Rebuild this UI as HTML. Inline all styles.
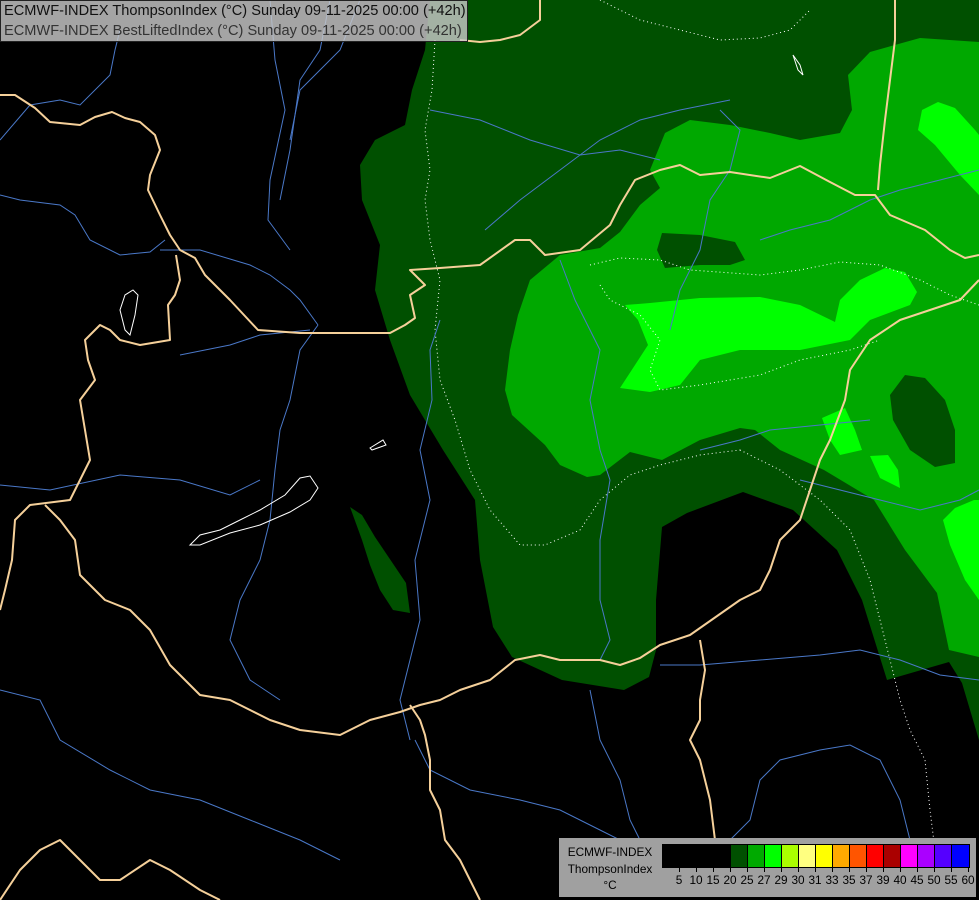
<!DOCTYPE html>
<html><head><meta charset="utf-8"><style>
html,body{margin:0;padding:0;background:#000;width:979px;height:900px;overflow:hidden}
svg{position:absolute;left:0;top:0}
.hdr{position:absolute;left:0;top:0;width:468px;height:42px;background:rgba(200,200,200,0.82);border:1px solid #222;box-sizing:border-box;font-family:"Liberation Sans",sans-serif;font-size:14.6px;line-height:19.5px;padding:1px 0 0 3px;color:#111;white-space:nowrap}
.hdr div:nth-child(2){color:#333}
.leg{position:absolute;left:559px;top:838px;width:417px;height:59px;background:#a0a0a0;font-family:"Liberation Sans",sans-serif;font-size:11.8px;color:#000}
.leg .t{position:absolute;left:0;width:102px;text-align:center}
.bar{position:absolute;left:103px;top:6px;height:22px;border:1px solid #000;display:flex}
.bar span{width:17px;height:22px;border-right:1px solid #000;box-sizing:border-box;display:block}
.bar span:last-child{border-right:none}
.nums{position:absolute;top:35px;left:0;width:417px;height:14px}
.nums b{position:absolute;font-weight:normal;transform:translateX(-50%)}
.nums i{position:absolute;top:-6px;width:1px;height:5px;background:#000}
</style></head><body>
<svg width="979" height="900" viewBox="0 0 979 900">
<rect width="979" height="900" fill="#000"/>
<path fill="#005000" d="M430,0 L979,0 L979,740 L962,683 L949,662 L887,680 L862,600 L837,550 L793,510 L743,492 L687,513 L662,527 L656,600 L656,650 L649,677 L624,690 L562,680 L512,657 L493,627 L480,560 L475,500 L443,450 L410,395 L390,340 L375,290 L380,245 L362,200 L360,165 L375,140 L405,125 L412,90 L425,50 Z"/>
<path fill="#005000" d="M350,507 L362,515 L375,537 L406,583 L410,613 L393,610 L380,590 L370,565 L362,540 Z"/>
<path fill="#00a800" d="M665,133 L690,120 L730,125 L770,133 L800,140 L840,133 L852,110 L848,75 L870,52 L920,38 L979,42 L979,657 L949,650 L937,593 L905,550 L874,500 L824,470 L780,450 L755,430 L740,428 L700,440 L662,460 L630,452 L600,475 L587,477 L560,465 L545,445 L512,415 L505,390 L510,350 L518,315 L530,280 L560,255 L600,248 L620,232 L640,205 L660,188 L650,170 Z"/>
<path fill="#005000" d="M662,233 L700,235 L735,242 L745,260 L730,265 L700,265 L665,268 L657,250 Z"/>
<path fill="#005000" d="M905,375 L925,378 L945,400 L955,430 L955,463 L935,467 L910,450 L893,420 L890,395 Z"/>
<path fill="#00ff00" d="M625,305 L650,303 L700,298 L760,297 L800,305 L835,322 L840,300 L860,280 L885,268 L905,272 L917,292 L910,305 L870,320 L850,340 L800,350 L740,350 L700,360 L680,385 L650,392 L620,388 L635,365 L648,345 L638,320 Z"/>
<path fill="#00ff00" d="M938,102 L955,108 L975,130 L979,135 L979,195 L960,175 L935,145 L918,130 L922,110 Z"/>
<path fill="#00ff00" d="M822,418 L845,408 L855,430 L862,450 L840,455 L830,440 Z"/>
<path fill="#00ff00" d="M870,456 L888,455 L898,470 L900,488 L880,478 Z"/>
<path fill="#00ff00" d="M943,520 L955,508 L974,500 L979,500 L979,600 L965,580 L950,545 Z"/>
<g fill="none" stroke="#fff" stroke-width="1" stroke-dasharray="1,3">
<path d="M435,40 L432,90 L425,130 L430,170 L425,200 L430,240 L440,280 L435,330 L440,380 L455,420 L470,470 L490,510 L520,545 L545,545 L580,530 L600,500 L630,475 L660,465 L700,455 L740,450"/>
<path d="M740,450 L780,470 L820,500 L850,530 L870,580 L885,640 L900,700 L910,730 L925,760 L930,810 L935,850"/>
<path d="M590,265 L620,258 L660,260 L690,270 L760,275 L800,270 L840,262 L880,265 L920,280 L950,295 L979,305"/>
<path d="M600,285 L610,300 L640,315 L660,340 L650,370 L660,390 L700,385 L760,375 L800,360 L850,350 L880,340"/>
<path d="M600,0 L640,20 L680,30 L720,40 L760,38 L790,30 L810,10"/>
</g>
<g fill="none" stroke="#4a78c8" stroke-width="1">
<path d="M0,195 L20,200 L60,205 L75,215 L90,240 L120,255 L150,252 L165,240"/>
<path d="M0,140 L30,105 L60,100 L80,105 L110,75 L115,50 L120,30"/>
<path d="M160,250 L200,250 L250,265 L270,275 L290,290 L300,300 L318,325"/>
<path d="M318,325 L300,350 L290,400 L280,430 L275,470 L270,520 L260,560 L240,600 L230,640 L250,680 L280,700"/>
<path d="M270,0 L275,60 L285,110 L270,180 L268,220 L290,250"/>
<path d="M330,0 L320,50 L300,80 L290,150 L280,200"/>
<path d="M360,0 L340,50 L320,70 L300,90 L290,140"/>
<path d="M0,485 L50,490 L120,475 L180,480 L230,495 L260,480"/>
<path d="M180,355 L230,345 L260,335 L310,330"/>
<path d="M440,320 L430,350 L432,400 L420,450 L430,500 L415,560 L420,620 L410,660 L400,700 L410,740"/>
<path d="M415,740 L430,770 L470,790 L520,800 L560,810 L600,830 L640,850 L700,870"/>
<path d="M0,690 L40,700 L60,740 L110,770 L150,790 L200,800 L250,820 L300,840 L340,860"/>
<path d="M485,230 L520,200 L560,170 L600,140 L640,120 L680,110 L730,100"/>
<path d="M430,110 L480,120 L530,140 L580,155 L620,150 L660,160"/>
<path d="M560,260 L575,300 L600,350 L590,400 L600,450 L610,480"/>
<path d="M720,110 L740,130 L730,170 L710,200 L700,250 L680,290 L670,330"/>
<path d="M760,240 L790,230 L830,220 L870,200 L900,190 L940,180 L979,170"/>
<path d="M610,480 L600,540 L600,600 L610,640 L600,660"/>
<path d="M590,690 L600,740 L620,780 L630,820 L640,840"/>
<path d="M660,665 L700,665 L760,660 L820,655 L860,650 L900,660 L940,675 L979,680"/>
<path d="M720,850 L750,820 L760,780 L780,760 L820,750 L850,745 L880,760 L900,800 L910,840"/>
<path d="M800,480 L840,490 L880,500 L920,510 L960,500 L979,490"/>
<path d="M700,450 L740,440 L770,430 L820,425 L870,420"/>
</g>
<g fill="none" stroke="#f5d09a" stroke-width="2" stroke-linejoin="round">
<path d="M0,95 L15,95 L35,108 L50,122 L80,125 L95,117 L112,112 L125,118 L140,122 L155,135 L160,150 L150,175 L148,190 L160,215 L170,235 L180,250 L195,258 L205,275 L230,300 L258,330 L300,333 L340,333 L390,333 L405,325 L415,318 L410,295 L425,285 L410,270 L440,268 L480,265 L515,240 L530,240 L545,255 L580,250 L610,225 L620,205 L635,180 L660,170 L680,165 L700,175 L730,172 L770,178 L800,166 L830,182 L855,195 L875,195 L890,215 L925,230 L950,250 L965,258 L979,255"/>
<path d="M176,255 L180,280 L175,295 L168,305 L170,340 L140,345 L120,340 L110,330 L100,325 L85,340 L88,360 L95,380 L80,400 L85,430 L90,460 L70,500 L30,505 L15,520 L12,560 L5,590 L0,610"/>
<path d="M45,505 L60,520 L75,540 L80,575 L105,600 L130,610 L150,630 L170,665 L200,695 L230,700 L250,710 L270,720 L300,730 L340,735 L370,720 L400,712 L420,705 L440,700 L460,690 L490,680 L515,660 L540,655 L560,660 L600,660 L620,665 L640,658 L660,645 L690,635 L740,600 L760,590 L770,570 L780,540 L800,520 L810,490 L820,460 L830,440 L845,400 L850,370 L870,340 L900,320 L930,310 L960,300 L979,280"/>
<path d="M410,705 L420,720 L425,735 L430,760 L430,790 L440,810 L445,840 L460,860 L470,880 L480,900"/>
<path d="M700,640 L705,670 L700,700 L700,720 L690,740 L700,760 L710,800 L715,840"/>
<path d="M540,0 L540,20 L520,35 L500,40 L480,42 L460,40"/>
<path d="M895,0 L895,40 L890,80 L885,120 L880,165 L878,190"/>
<path d="M0,900 L20,870 L40,850 L60,840 L80,860 L100,880 L120,880 L150,860 L170,870 L200,890 L220,900"/>
</g>
<g fill="none" stroke="#fff" stroke-width="1">
<path d="M190,545 L200,535 L220,530 L240,520 L260,510 L285,495 L300,478 L310,476 L318,488 L310,500 L290,512 L260,525 L230,533 L200,545 Z"/>
<path d="M125,330 L120,310 L125,295 L133,290 L138,295 L135,315 L130,335 Z"/>
<path d="M370,448 L383,440 L386,445 L372,450 Z"/>
<path d="M793,55 L800,65 L803,75 L798,70 Z"/>
</g>
</svg>
<div class="hdr"><div>ECMWF-INDEX ThompsonIndex (°C) Sunday 09-11-2025 00:00 (+42h)</div><div>ECMWF-INDEX BestLiftedIndex (°C) Sunday 09-11-2025 00:00 (+42h)</div></div>
<div class="leg">
<div class="t" style="top:7px">ECMWF-INDEX</div>
<div class="t" style="top:24px">ThompsonIndex</div>
<div class="t" style="top:40px">°C</div>
<div class="bar">
<span style="background:#000"></span><span style="background:#000"></span><span style="background:#000"></span><span style="background:#000"></span>
<span style="background:#005000"></span><span style="background:#00aa00"></span><span style="background:#00ff00"></span><span style="background:#aaff00"></span>
<span style="background:#ffff80"></span><span style="background:#ffff00"></span><span style="background:#ffaa00"></span><span style="background:#ff5500"></span>
<span style="background:#ff0000"></span><span style="background:#aa0000"></span><span style="background:#ff00ff"></span><span style="background:#aa00ff"></span>
<span style="background:#5500ff"></span><span style="background:#0000ff"></span>
</div>
<div class="nums">
<i style="left:120px"></i><b style="left:120px">5</b>
<i style="left:137px"></i><b style="left:137px">10</b>
<i style="left:154px"></i><b style="left:154px">15</b>
<i style="left:171px"></i><b style="left:171px">20</b>
<i style="left:188px"></i><b style="left:188px">25</b>
<i style="left:205px"></i><b style="left:205px">27</b>
<i style="left:222px"></i><b style="left:222px">29</b>
<i style="left:239px"></i><b style="left:239px">30</b>
<i style="left:256px"></i><b style="left:256px">31</b>
<i style="left:273px"></i><b style="left:273px">33</b>
<i style="left:290px"></i><b style="left:290px">35</b>
<i style="left:307px"></i><b style="left:307px">37</b>
<i style="left:324px"></i><b style="left:324px">39</b>
<i style="left:341px"></i><b style="left:341px">40</b>
<i style="left:358px"></i><b style="left:358px">45</b>
<i style="left:375px"></i><b style="left:375px">50</b>
<i style="left:392px"></i><b style="left:392px">55</b>
<i style="left:409px"></i><b style="left:409px">60</b>
</div>
</div>
</body></html>
